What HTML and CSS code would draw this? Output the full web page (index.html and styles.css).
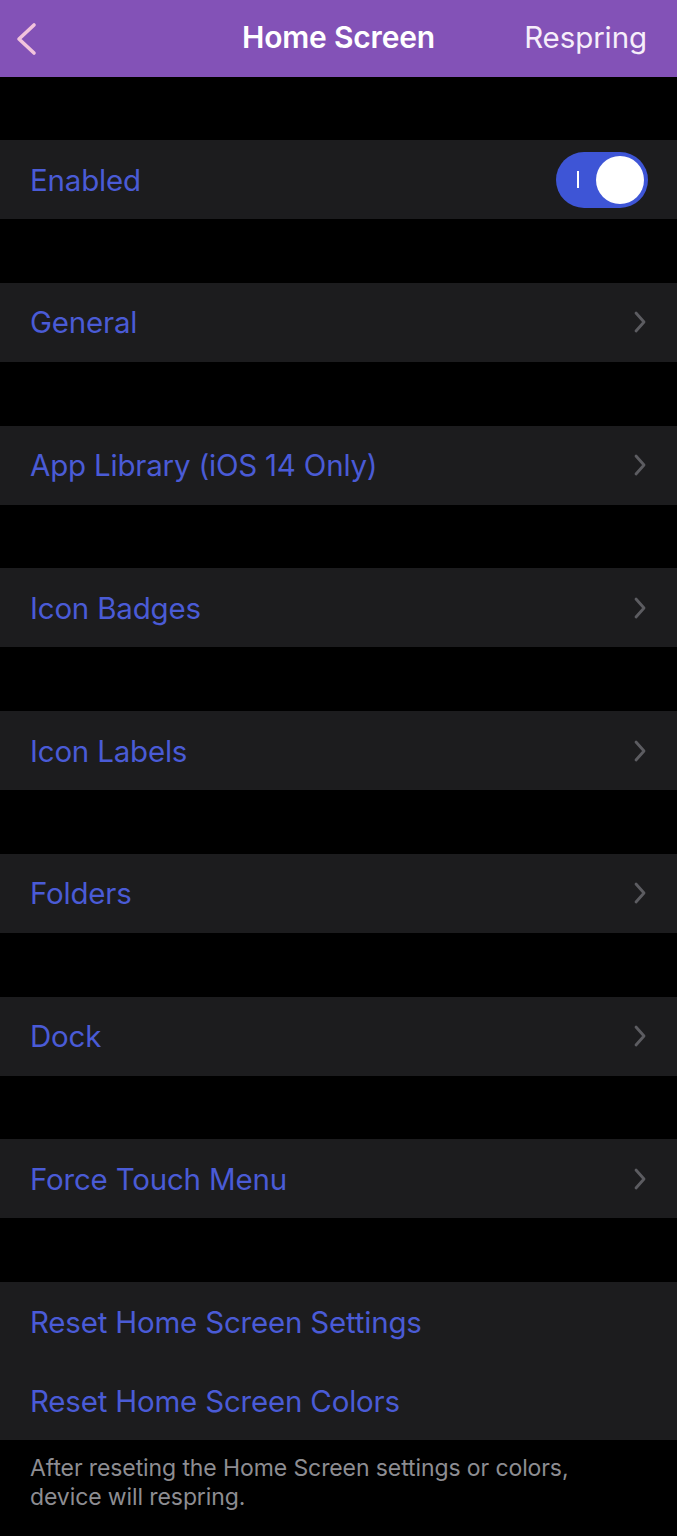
FILE: index.html
```html
<!DOCTYPE html>
<html>
<head>
<meta charset="utf-8">
<link rel="stylesheet" href="styles.css">
</head>
<body>
<header class="nav">
  <svg class="back" width="24" height="34" viewBox="0 0 24 34"><path d="M20 3 L5 17 L20 31" fill="none" stroke="#f2c4dc" stroke-width="3.6" stroke-linecap="round" stroke-linejoin="round"/></svg>
  <div class="title">Home Screen</div>
  <div class="action">Respring</div>
</header>
<main class="list">
  <section class="group">
    <div class="row"><span class="label">Enabled</span>
      <span class="toggle"><span class="mark"></span><span class="knob"></span></span>
    </div>
  </section>
  <section class="group"><div class="row"><span class="label">General</span><svg class="chev" width="14" height="24" viewBox="0 0 14 24"><path d="M3 3 L11 12 L3 21" /></svg></div></section>
  <section class="group"><div class="row"><span class="label">App Library (iOS 14 Only)</span><svg class="chev" width="14" height="24" viewBox="0 0 14 24"><path d="M3 3 L11 12 L3 21" /></svg></div></section>
  <section class="group"><div class="row"><span class="label">Icon Badges</span><svg class="chev" width="14" height="24" viewBox="0 0 14 24"><path d="M3 3 L11 12 L3 21" /></svg></div></section>
  <section class="group"><div class="row"><span class="label">Icon Labels</span><svg class="chev" width="14" height="24" viewBox="0 0 14 24"><path d="M3 3 L11 12 L3 21" /></svg></div></section>
  <section class="group"><div class="row"><span class="label">Folders</span><svg class="chev" width="14" height="24" viewBox="0 0 14 24"><path d="M3 3 L11 12 L3 21" /></svg></div></section>
  <section class="group"><div class="row"><span class="label">Dock</span><svg class="chev" width="14" height="24" viewBox="0 0 14 24"><path d="M3 3 L11 12 L3 21" /></svg></div></section>
  <section class="group"><div class="row"><span class="label">Force Touch Menu</span><svg class="chev" width="14" height="24" viewBox="0 0 14 24"><path d="M3 3 L11 12 L3 21" /></svg></div></section>
  <section class="group">
    <div class="row"><span class="label">Reset Home Screen Settings</span></div>
    <div class="row"><span class="label">Reset Home Screen Colors</span></div>
  </section>
  <p class="footer">After reseting the Home Screen settings or colors, device will respring.</p>
</main>
</body>
</html>
```

FILE: styles.css
```css
html, body {
  margin: 0;
  padding: 0;
  background: #000;
}
body {
  width: 677px;
  height: 1536px;
  overflow: hidden;
  font-family: Inter, "Noto Sans", sans-serif;
}
.nav {
  height: 77px;
  background: #8352b7;
  display: flex;
  align-items: center;
  position: relative;
  color: #fff;
}
.back {
  margin-left: 14px;
  margin-top: 1px;
}
.title {
  position: absolute;
  left: 0;
  right: 0;
  top: 17px;
  text-align: center;
  font-size: 30px;
  line-height: 40px;
  font-weight: 600;
  letter-spacing: -0.2px;
  pointer-events: none;
}
.action {
  margin-left: auto;
  margin-right: 30px;
  margin-top: -3px;
  font-size: 29.5px;
  font-weight: 400;
  color: #f6eefa;
  letter-spacing: -0.1px;
}
.list {
  display: flex;
  flex-direction: column;
  gap: 63.75px;
  padding-top: 63px;
}
.group {
  background: #1c1c1e;
  display: flex;
  flex-direction: column;
}
.row {
  height: 79px;
  display: flex;
  align-items: center;
  padding: 0 30px;
}
.label {
  color: #4a5bd6;
  font-size: 29.5px;
  letter-spacing: -0.2px;
}
.chev {
  margin-left: auto;
  margin-right: 0;
  fill: none;
  stroke: #5c5c61;
  stroke-width: 2.8;
  stroke-linecap: round;
  stroke-linejoin: round;
}
.toggle {
  margin-left: auto;
  margin-right: -1px;
  width: 92px;
  height: 56px;
  border-radius: 28px;
  background: #3e55d6;
  display: flex;
  align-items: center;
  justify-content: space-between;
  padding: 0 4px 0 21px;
  box-sizing: border-box;
}
.mark {
  width: 2px;
  height: 17px;
  background: #fff;
}
.knob {
  width: 48px;
  height: 48px;
  border-radius: 50%;
  background: #fff;
}
.footer {
  margin: -50px 0 0;
  padding: 0 60px 0 30px;
  color: #8d8d92;
  font-size: 23px;
  line-height: 29px;
  letter-spacing: -0.1px;
}
```
